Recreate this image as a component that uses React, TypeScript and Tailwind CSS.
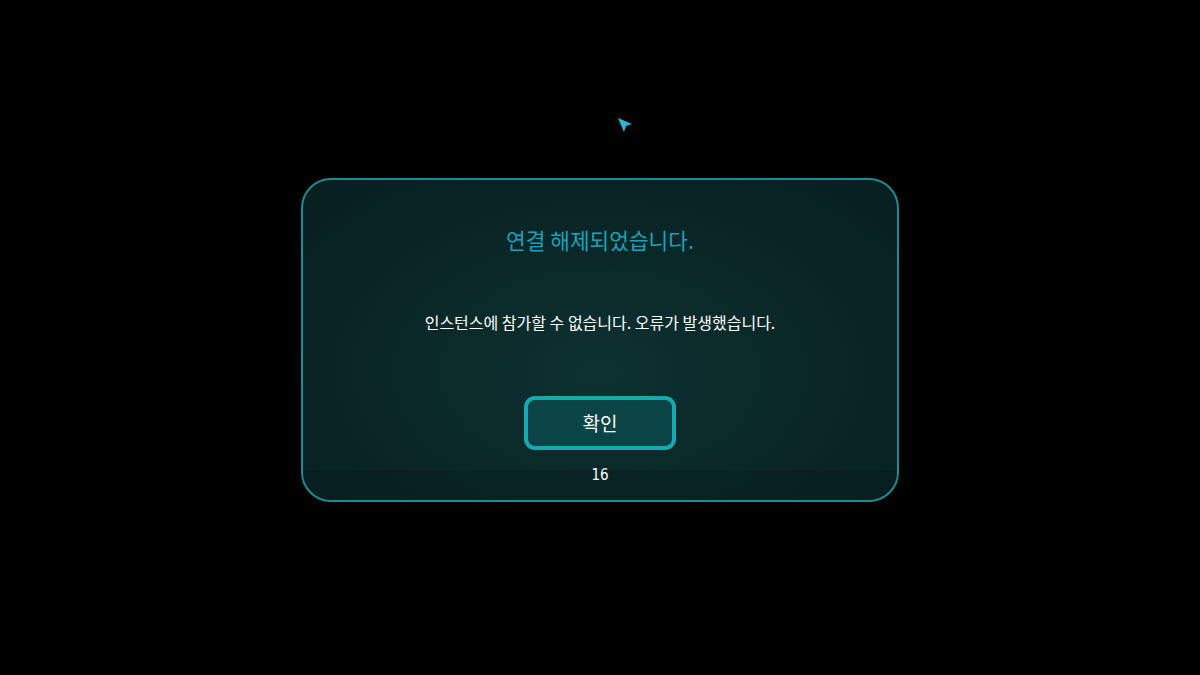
import React from "react";

export default function App() {
  return (
    <div
      className="relative w-[1200px] h-[675px] bg-black overflow-hidden"
      style={{ fontFamily: '"Noto Sans CJK KR", "Noto Sans", sans-serif' }}
    >
      {/* cursor */}
      <svg
        className="absolute left-[617px] top-[117px]"
        width="17"
        height="17"
        viewBox="0 0 17 17"
      >
        <path d="M1 1 L15 7 L9 9 L7 15 Z" fill="#2bb6d6" />
      </svg>

      <div className="flex justify-center pt-[178px]">
        <div className="relative w-[598px] h-[324px] rounded-[30px] border-[2.5px] border-[#1b8d91] bg-[radial-gradient(ellipse_at_50%_60%,#0d3131_0%,#0a2727_50%,#081e1f_100%)] overflow-hidden flex flex-col items-center">
          <div className="absolute left-0 right-0 bottom-0 h-[30px] bg-[#071c1d]/40" />
          <div className="mt-[46px] text-[21.4px] leading-[28px] text-[#1aa2bb]">
            연결 해제되었습니다.
          </div>
          <div className="mt-[57px] text-[16px] leading-[22px] text-white">
            인스턴스에 참가할 수 없습니다. 오류가 발생했습니다.
          </div>
          <div className="mt-[63px] w-[152px] h-[54px] rounded-[11px] border-[4px] border-[#15a9b0] bg-[#0b4446] flex items-center justify-center text-[19px] text-white">
            확인
          </div>
          <div
            className="relative mt-[15px] text-[15px] leading-[20px] text-white"
            style={{ fontFamily: '"Liberation Sans Narrow", "DejaVu Sans Condensed", sans-serif' }}
          >
            16
          </div>
        </div>
      </div>
    </div>
  );
}
